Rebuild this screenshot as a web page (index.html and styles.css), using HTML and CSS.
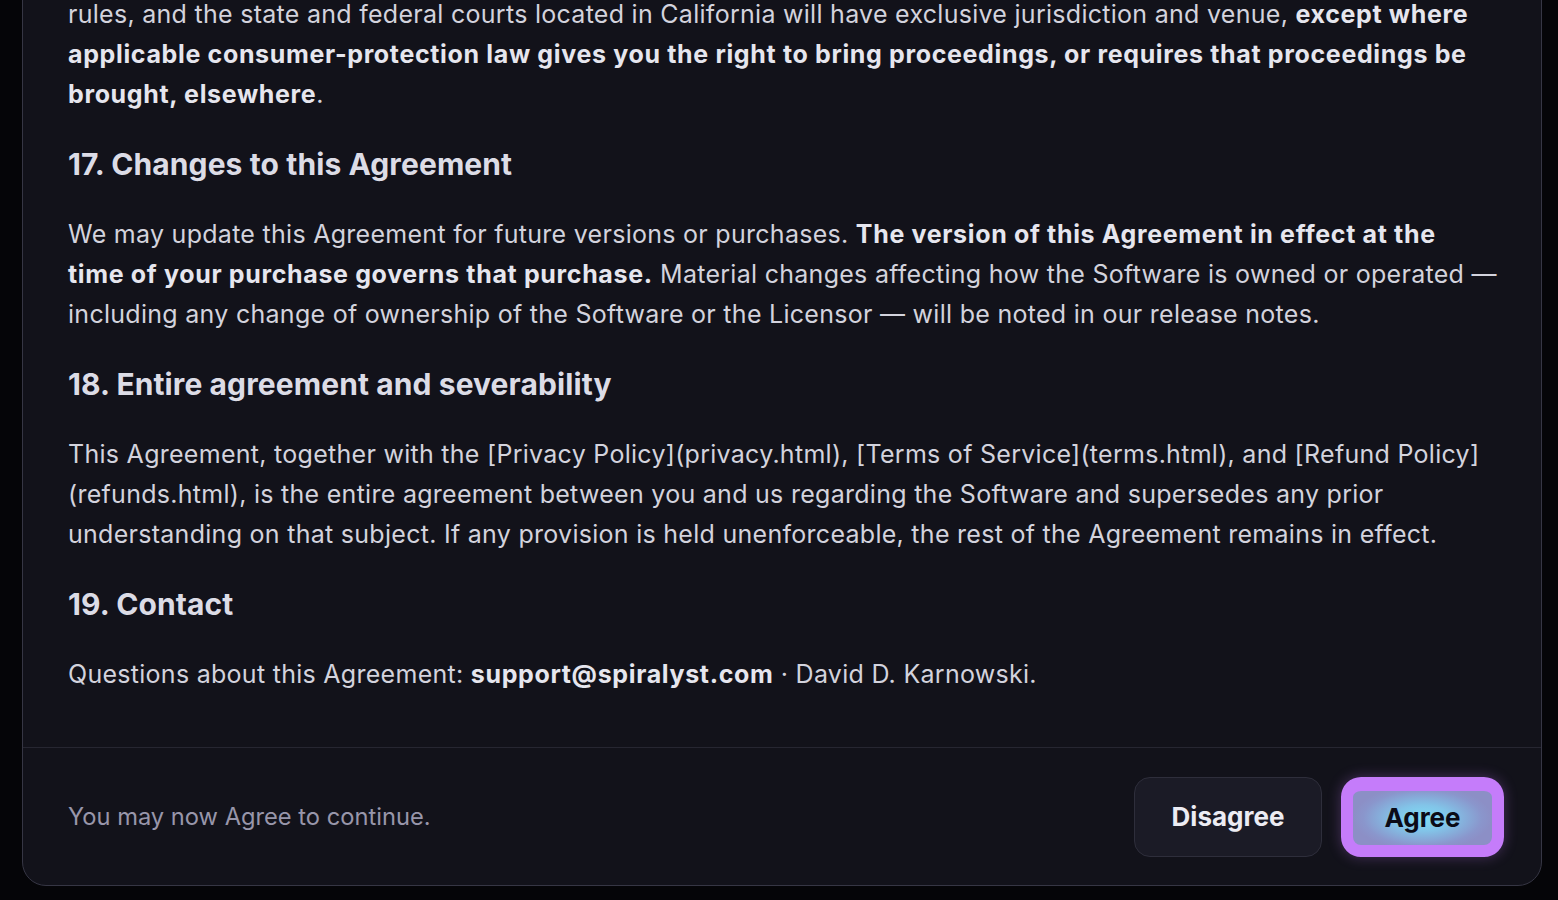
FILE: index.html
```html
<!DOCTYPE html>
<html lang="en">
<head>
<meta charset="utf-8">
<title>License Agreement</title>
<link rel="stylesheet" href="styles.css">
</head>
<body>
<div class="page">
  <div class="card">
    <div class="scroll">
      <p class="para">rules, and the state and federal courts located in California will have exclusive jurisdiction and venue, <b>except where applicable consumer-protection law gives you the right to bring proceedings, or requires that proceedings be brought, elsewhere</b>.</p>
      <h2 class="heading">17. Changes to this Agreement</h2>
      <p class="para">We may update this Agreement for future versions or purchases. <b>The version of this Agreement in effect at the time of your purchase governs that purchase.</b> Material changes affecting how the Software is owned or operated — including any change of ownership of the Software or the Licensor — will be noted in our release notes.</p>
      <h2 class="heading">18. Entire agreement and severability</h2>
      <p class="para">This Agreement, together with the [Privacy Policy](privacy.html), [Terms of Service](terms.html), and [Refund Policy](refunds.html), is the entire agreement between you and us regarding the Software and supersedes any prior understanding on that subject. If any provision is held unenforceable, the rest of the Agreement remains in effect.</p>
      <h2 class="heading">19. Contact</h2>
      <p class="para">Questions about this Agreement: <b>support@spiralyst.com</b> · David D. Karnowski.</p>
    </div>
    <div class="footer">
      <span class="status">You may now Agree to continue.</span>
      <div class="actions">
        <button class="btn btn-secondary" type="button">Disagree</button>
        <button class="btn btn-primary" type="button">Agree</button>
      </div>
    </div>
  </div>
</div>
</body>
</html>
```

FILE: styles.css
```css
* { box-sizing: border-box; }
html {
  overflow: hidden;
  background: #050508;
}
body {
  margin: 0;
  padding: 0;
  background: #050508;
  font-family: Inter, "Noto Sans", "Liberation Sans", sans-serif;
}
.page {
  padding: 0 16px 0 22px;
}
.card {
  margin-top: -40px;
  width: 1520px;
  background: #12121a;
  border: 1px solid #363644;
  border-radius: 24px;
}
.scroll {
  height: 787px;
  overflow: hidden;
  display: flex;
  flex-direction: column;
  justify-content: flex-end;
  padding: 0 44px 53px 45px;
  border-bottom: 1px solid #262631;
}
.para {
  flex-shrink: 0;
  margin: 0;
  font-size: 25px;
  line-height: 40px;
  letter-spacing: 0.28px;
  color: #d3d3dd;
}
.para b {
  font-weight: 700;
  letter-spacing: 0.65px;
  color: #e6e6ee;
}
.heading {
  flex-shrink: 0;
  margin: 32px 0;
  font-size: 30px;
  line-height: 36px;
  letter-spacing: 0.1px;
  font-weight: 700;
  color: #dcdce6;
}
.footer {
  height: 137px;
  display: flex;
  align-items: center;
  justify-content: space-between;
  padding: 0 37px 0 45px;
}
.status {
  font-size: 23.7px;
  color: #9896aa;
}
.actions {
  display: flex;
  gap: 19px;
  align-items: center;
}
.btn {
  height: 80px;
  font-family: inherit;
  font-size: 26px;
  font-weight: 700;
  cursor: pointer;
}
.btn-secondary {
  width: 188px;
  border-radius: 16px;
  border: 1px solid #2e2e3b;
  background: #1b1b26;
  color: #ececf3;
}
.btn-primary {
  width: 163px;
  border-radius: 20px;
  border: 12px solid #c57cfa;
  border-top-width: 14px;
  background: radial-gradient(ellipse 50% 60% at 50% 50%, #7fdcf5 0%, #82c4e8 40%, #8a96cc 85%, #8c8fc6 100%);
  color: #0b0b16;
  box-shadow: 0 0 14px rgba(197, 124, 250, 0.3);
  padding: 0;
}
```
